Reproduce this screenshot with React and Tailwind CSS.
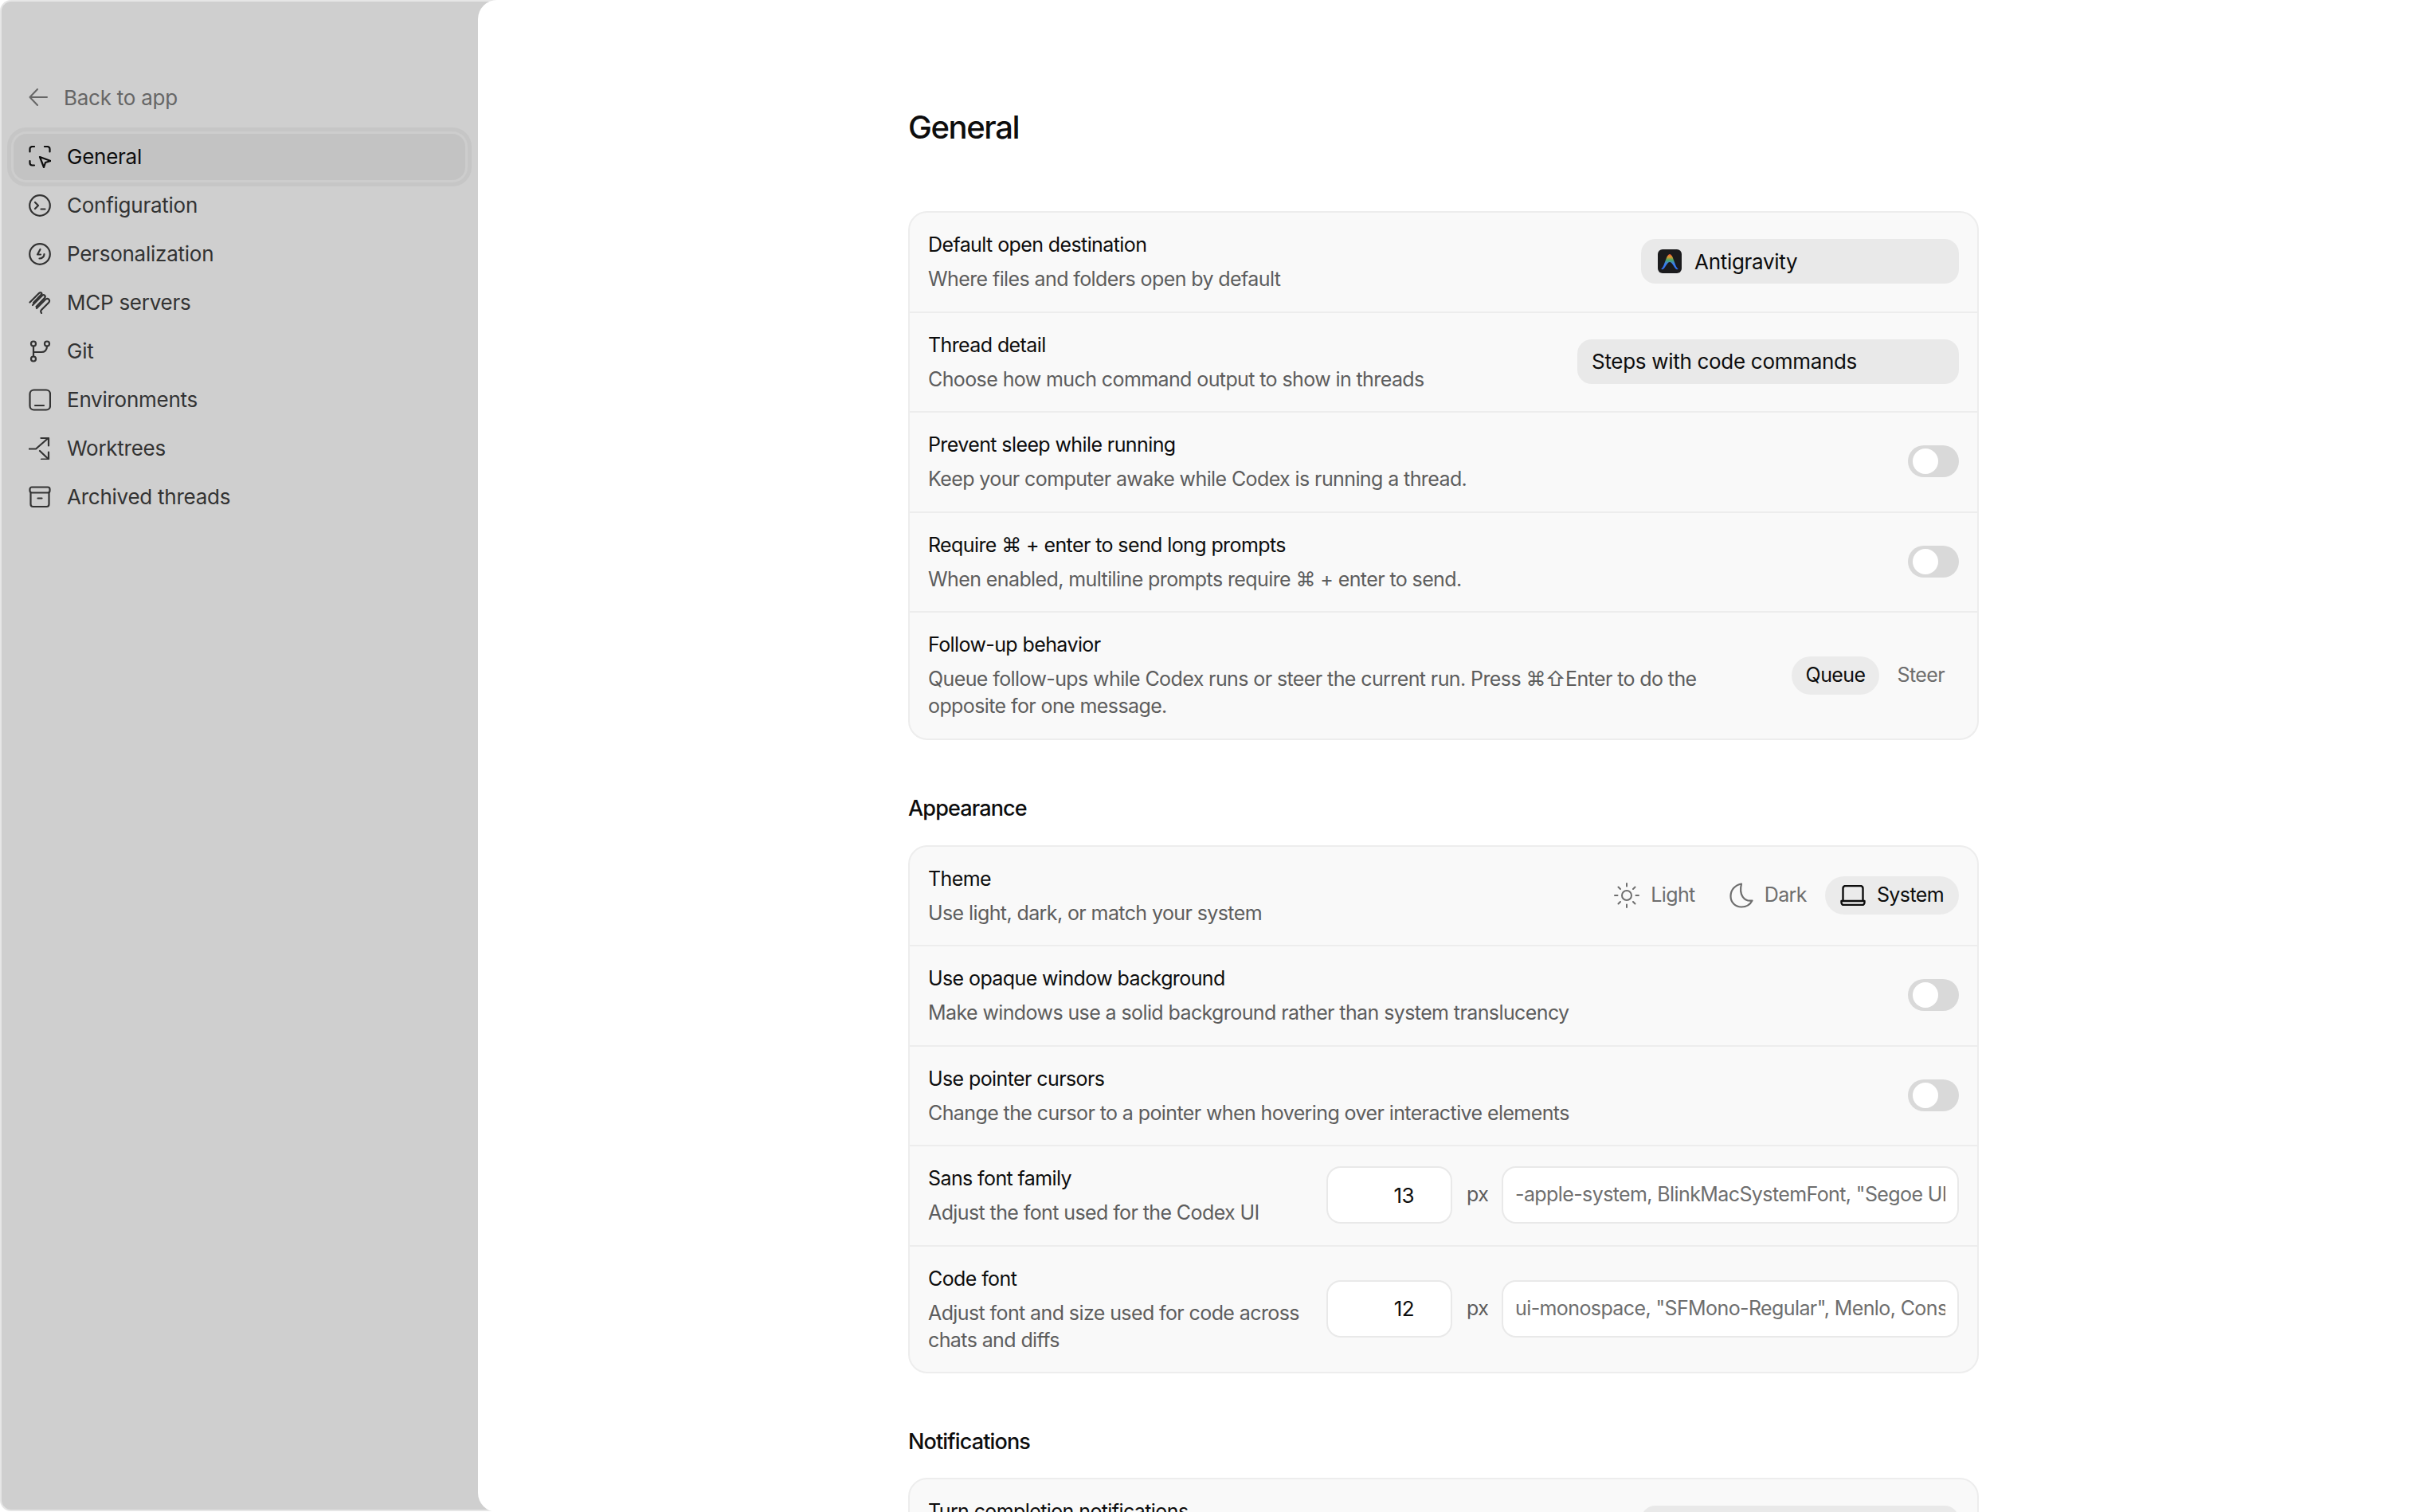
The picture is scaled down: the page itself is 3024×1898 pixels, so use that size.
import React from 'react';

const Toggle = () => (
  <div className="w-[64px] h-[40px] rounded-full bg-[#d9d9d9] flex items-center pl-[6px] shrink-0">
    <div className="w-[32px] h-[32px] rounded-full bg-white" />
  </div>
);

const Icon = ({ children, className = 'text-[#333333]' }) => (
  <svg width="28" height="28" viewBox="0 0 28 28" fill="none" stroke="currentColor" strokeWidth="2.2" strokeLinecap="round" strokeLinejoin="round" className={`shrink-0 ${className}`}>
    {children}
  </svg>
);

const navItems = [
  {
    label: 'General',
    active: true,
    icon: (
      <>
        <path d="M1.5 7.5V4a3 3 0 0 1 3-3H7" />
        <path d="M20 1h3.5a3 3 0 0 1 3 3v3.5" />
        <path d="M1.5 19v2.5a3 3 0 0 0 3 3H7" />
        <path d="M14 14l13.500 5-6.500 2-2 6z" />
      </>
    ),
  },
  {
    label: 'Configuration',
    icon: (
      <>
        <circle cx="14" cy="14" r="12.8" />
        <path d="M8 10l4 4-4 4" />
        <path d="M15.5 18.5h5" />
      </>
    ),
  },
  {
    label: 'Personalization',
    icon: (
      <>
        <circle cx="14" cy="14" r="12.8" />
        <path d="M14.5 8l-3.5 6.5h4" />
        <path d="M19.5 14c0 3-2.5 5.5-6 5.5" />
      </>
    ),
  },
  {
    label: 'MCP servers',
    icon: (
      <>
        <path d="M1.5 13.5L13 2c1.5-1.5 3.5-.5 3.5 1L6 14" />
        <path d="M5 17L17 5c2-2 5 .5 3 3L9.5 19" />
        <path d="M10 21l11-11c3-3 7 1 4 4l-9 9c-1.5 1.5-1 2.5 0 4" />
      </>
    ),
  },
  {
    label: 'Git',
    icon: (
      <>
        <circle cx="6" cy="4.5" r="3" />
        <circle cx="6" cy="23.5" r="3" />
        <circle cx="23" cy="4.5" r="3" />
        <path d="M6 7.5v13" />
        <path d="M6 15h10c4 0 7-2.5 7-7.5" />
      </>
    ),
  },
  {
    label: 'Environments',
    icon: (
      <>
        <rect x="1.5" y="1.5" width="25.5" height="25" rx="5" />
        <path d="M8 21h11" />
      </>
    ),
  },
  {
    label: 'Worktrees',
    icon: (
      <>
        <path d="M0 14.5h9L24.5 1" />
        <path d="M15.5 1h9.5v9.5" />
        <path d="M14 17l10.5 10" />
        <path d="M25 18.5v9h-9" />
      </>
    ),
  },
  {
    label: 'Archived threads',
    icon: (
      <>
        <rect x="1.5" y="1.5" width="25" height="7" rx="2.5" />
        <path d="M2.5 8.5V23a3 3 0 0 0 3 3h17a3 3 0 0 0 3-3V8.5" />
        <path d="M11.5 15.5h5" />
      </>
    ),
  },
];

const Row = ({ title, children, control }) => (
  <div className="flex items-center justify-between gap-[24px] pl-[23px] pr-[23px] pt-[22px] pb-[23.5px] border-b-2 border-[#ededed] last:border-b-0">
    <div className="min-w-0 flex-1">
      <div className="text-[25px] leading-[36px] text-[#0d0d0d]">{title}</div>
      <div className="mt-[8px] text-[25px] leading-[34px] text-[#5d5d5d]">{children}</div>
    </div>
    {control}
  </div>
);

const Select = ({ className, children }) => (
  <div className={`h-[56px] rounded-[18px] bg-[#e9e9e9] flex items-center shrink-0 text-[26px] tracking-[-0.3px] text-[#0d0d0d] ${className}`}>
    {children}
  </div>
);

const Logo = () => (
  <svg width="30" height="30" viewBox="0 0 30 30" className="shrink-0">
    <defs>
      <linearGradient id="ag" x1="0" y1="0" x2="0" y2="1">
        <stop offset="0" stopColor="#e8503a" />
        <stop offset="0.18" stopColor="#e09a30" />
        <stop offset="0.38" stopColor="#4aa866" />
        <stop offset="0.62" stopColor="#3a7ff0" />
        <stop offset="1" stopColor="#2f6df0" />
      </linearGradient>
    </defs>
    <rect width="30" height="30" rx="6" fill="#1b1b1d" />
    <path d="M4.5 24.5C9 21 10.5 6 15 6s6 15 10.5 18.5c.5.4-1 1-2 .5-3-1.500-5-9-8.500-9s-5.500 7.500-8.500 9c-1 .5-2.500-.1-2-.5z" fill="url(#ag)" />
  </svg>
);

const Segment = ({ active, icon, label, className }) => (
  <div className={`h-[48px] rounded-full flex items-center gap-[14px] ${active ? 'bg-[#ebebeb] text-[#0d0d0d]' : 'text-[#6e6e6e]'} ${className}`}>
    {icon}
    <span className="text-[25px]">{label}</span>
  </div>
);

const Sun = () => (
  <svg width="32" height="32" viewBox="0 0 32 32" fill="none" stroke="currentColor" strokeWidth="2" strokeLinecap="round">
    <circle cx="16" cy="16" r="6" />
    <path d="M16 1v3.5M16 27.5V31M1 16h3.5M27.5 16H31M5.5 5.500L8 8M24 24l2.5 2.5M5.500 26.500L8 24M24 8l2.500-2.500" />
  </svg>
);

const Moon = () => (
  <svg width="30" height="32" viewBox="0 0 30 32" fill="none" stroke="currentColor" strokeWidth="2.2" strokeLinejoin="round">
    <path d="M15 1.5C7 3 1.5 9 1.5 17c0 8 6 13.5 13.5 13.5 6.5 0 11-3 13.5-8-10 1.5-17-7-13.5-21z" />
  </svg>
);

const Laptop = () => (
  <svg width="32" height="26" viewBox="0 0 32 26" fill="none" stroke="currentColor" strokeWidth="2.4" strokeLinejoin="round" strokeLinecap="round">
    <path d="M3.5 19V4a3 3 0 0 1 3-3h19a3 3 0 0 1 3 3v15" />
    <path d="M1.5 20h29v2a3 3 0 0 1-3 3h-23a3 3 0 0 1-3-3z" />
  </svg>
);

const FontInputs = ({ size, value }) => (
  <div className="flex items-center shrink-0">
    <div className="w-[158px] h-[72px] rounded-[18px] bg-white border-[2.5px] border-[#e9e9e9] flex items-center justify-end pr-[46px] text-[26px] text-[#0d0d0d]">{size}</div>
    <span className="ml-[18px] mr-[18px] w-[26px] text-[25px] text-[#5d5d5d]">px</span>
    <div className="w-[574px] h-[72px] rounded-[18px] bg-white border-[2.5px] border-[#e9e9e9] flex items-center px-[15px]">
      <div className="overflow-hidden whitespace-nowrap text-[25px] text-[#6e6e6e]">{value}</div>
    </div>
  </div>
);

const Card = ({ children }) => (
  <div className="rounded-[24px] border-2 border-[#ededed] bg-[#f9f9f9]">{children}</div>
);

const SectionTitle = ({ children, className = '' }) => (
  <div className={`text-[27px] tracking-[-0.85px] leading-[36px] font-medium text-[#0d0d0d] ${className}`}>{children}</div>
);

const Sidebar = () => (
  <div className="w-[630px] h-[1897px] shrink-0 bg-[#cfcfcf] rounded-l-[14px] border-2 border-r-0 border-[#e6e6e6] tracking-[-0.25px]">
    <div className="w-[598px] pt-[102px] pl-[15px] pr-[16px]">
      <div className="h-[36px] pl-[19px] flex items-center gap-[20px] text-[26px] text-[#666666]">
        <svg width="24" height="24" viewBox="0 0 24 24" fill="none" stroke="currentColor" strokeWidth="2" strokeLinecap="round" strokeLinejoin="round">
          <path d="M23 12H1.5M11 2L1.5 12 11 22" />
        </svg>
        Back to app
      </div>
      <div className="mt-[26px]">
        {navItems.map((item) => (
          <div key={item.label} className="h-[61px] flex items-center">
            <div
              className={`w-full h-[58px] flex items-center gap-[20px] pl-[19px] text-[26px] rounded-[16px] ${
                item.active
                  ? 'bg-[#c3c3c3] shadow-[0_0_0_3px_#cdcdcd,0_0_0_8px_#c6c6c6] text-[#0d0d0d]'
                  : 'text-[#333333]'
              }`}
            >
              <Icon className={item.active ? 'text-[#0d0d0d]' : 'text-[#333333]'}>{item.icon}</Icon>
              {item.label}
            </div>
          </div>
        ))}
      </div>
    </div>
  </div>
);

export default function App() {
  return (
    <div className="w-[3024px] h-[1898px] flex bg-white overflow-hidden font-['Inter',sans-serif]">
      <Sidebar />
      <div className="flex-1 -ml-[30px] h-[1898px] relative rounded-l-[24px] bg-white overflow-hidden tracking-[-0.6px]">
        <div className="w-[1344px] mx-auto">
          <h1 className="pt-[136px] h-[265px] text-[40px] tracking-[-1.4px] leading-[48px] font-medium text-[#0d0d0d]">General</h1>

          <Card>
            <Row
              title="Default open destination"
              control={
                <Select className="w-[399px] pl-[21px] gap-[16px]">
                  <Logo />
                  Antigravity
                </Select>
              }
            >
              Where files and folders open by default
            </Row>
            <Row
              title="Thread detail"
              control={<Select className="w-[479px] pl-[18px]">Steps with code commands</Select>}
            >
              Choose how much command output to show in threads
            </Row>
            <Row title="Prevent sleep while running" control={<Toggle />}>
              Keep your computer awake while Codex is running a thread.
            </Row>
            <Row title="Require ⌘ + enter to send long prompts" control={<Toggle />}>
              When enabled, multiline prompts require ⌘ + enter to send.
            </Row>
            <Row
              title="Follow-up behavior"
              control={
                <div className="flex items-center gap-[4px] shrink-0 ml-[90px] mt-[2px]">
                  <div className="h-[48px] px-[18px] rounded-full bg-[#ebebeb] flex items-center text-[25px] text-[#0d0d0d]">Queue</div>
                  <div className="h-[48px] px-[18px] flex items-center text-[25px] text-[#6e6e6e]">Steer</div>
                </div>
              }
            >
              Queue follow-ups while Codex runs or steer the current run. Press ⌘⇧Enter to do the opposite for one message.
            </Row>
          </Card>

          <SectionTitle className="mt-[68px] mb-[28px]">Appearance</SectionTitle>

          <Card>
            <Row
              title="Theme"
              control={
                <div className="flex items-center gap-[3px] shrink-0">
                  <Segment icon={<Sun />} label="Light" className="px-[20px]" />
                  <Segment icon={<Moon />} label="Dark" className="px-[20px]" />
                  <Segment active icon={<Laptop />} label="System" className="px-[19px]" />
                </div>
              }
            >
              Use light, dark, or match your system
            </Row>
            <Row title="Use opaque window background" control={<Toggle />}>
              Make windows use a solid background rather than system translucency
            </Row>
            <Row title="Use pointer cursors" control={<Toggle />}>
              Change the cursor to a pointer when hovering over interactive elements
            </Row>
            <Row
              title="Sans font family"
              control={<FontInputs size="13" value={'-apple-system, BlinkMacSystemFont, "Segoe UI", Roboto, sans-serif'} />}
            >
              Adjust the font used for the Codex UI
            </Row>
            <Row
              title="Code font"
              control={<FontInputs size="12" value={'ui-monospace, "SFMono-Regular", Menlo, Consolas, monospace'} />}
            >
              Adjust font and size used for code across chats and diffs
            </Row>
          </Card>

          <SectionTitle className="mt-[68px] mb-[27px]">Notifications</SectionTitle>

          <Card>
            <Row
              title="Turn completion notifications"
              control={<Select className="w-[399px] pl-[18px]" />}
            >
              Set when Codex alerts you that it's finished
            </Row>
          </Card>
        </div>
      </div>
    </div>
  );
}
